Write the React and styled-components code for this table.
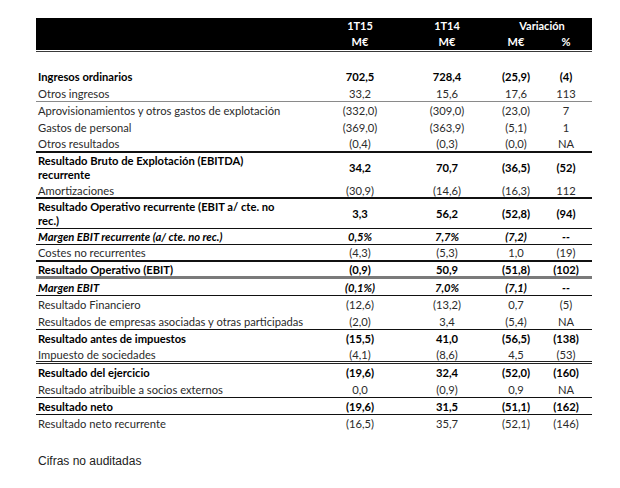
import React from "react";
import styled, { createGlobalStyle } from "styled-components";

const Global = createGlobalStyle`
  html, body { margin: 0; padding: 0; background: #fff; }
  body { font-family: Lato, "Open Sans", sans-serif; }
`;

const COLS = "282px 84px 90px 48px 52px";

const Page = styled.div`
  width: 620px;
  height: 488px;
  box-sizing: border-box;
  padding: 18px 0 0 36px;
`;

const Table = styled.div`
  width: 556px;
`;

const HeadWrap = styled.div`
  padding-bottom: 1px;
  border-bottom: 1px solid #3a3a3a;
`;

const Head = styled.div`
  background: #000;
  color: #fff;
  display: grid;
  grid-template-columns: ${COLS};
  grid-auto-rows: 16px;
  height: 32px;
  font-size: 11px;
  font-weight: 700;
  line-height: 16px;
`;

const HeadCell = styled.div`
  text-align: center;
  grid-column: ${(p) => p.$span || "auto"};
`;

const Spacer = styled.div`
  height: 16px;
`;

const borders = {
  none: "none",
  gray: "1px solid #8a8a8a",
  black: "1px solid #111",
  heavy: "2px solid #111",
  thick: "3px solid #7a7a7a",
  double: "3px double #222",
};

const Row = styled.div`
  box-sizing: border-box;
  display: grid;
  grid-template-columns: ${COLS};
  align-items: center;
  height: ${(p) => (p.$multi ? "30px" : p.$tight ? "16px" : "17px")};
  font-size: 11.2px;
  line-height: ${(p) => (p.$multi ? "14px" : "15px")};
  color: ${(p) => (p.$bold ? "#000" : "#2b2b2b")};
  font-weight: ${(p) => (p.$bold ? 700 : 400)};
  font-style: ${(p) => (p.$italic ? "italic" : "normal")};
  border-bottom: ${(p) => borders[p.$border || "none"]};
`;

const Label = styled.div`
  padding-left: 2px;
`;

const Num = styled.div`
  text-align: center;
  white-space: nowrap;
`;

const Note = styled.div`
  margin-top: 22px;
  padding-left: 2px;
  font-family: "Liberation Sans", Arial, sans-serif;
  font-size: 12px;
  line-height: 14px;
  color: #222;
`;

const rows = [
  { l: "Ingresos ordinarios", v: ["702,5", "728,4", "(25,9)", "(4)"], b: true },
  { l: "Otros ingresos", v: ["33,2", "15,6", "17,6", "113"], border: "gray" },
  { l: "Aprovisionamientos y otros gastos de explotación", v: ["(332,0)", "(309,0)", "(23,0)", "7"] },
  { l: "Gastos de personal", v: ["(369,0)", "(363,9)", "(5,1)", "1"] },
  { l: "Otros resultados", v: ["(0,4)", "(0,3)", "(0,0)", "NA"], border: "heavy" },
  { l: ["Resultado Bruto de Explotación (EBITDA)", "recurrente"], v: ["34,2", "70,7", "(36,5)", "(52)"], b: true },
  { l: "Amortizaciones", v: ["(30,9)", "(14,6)", "(16,3)", "112"], border: "heavy", t: true },
  { l: ["Resultado Operativo recurrente (EBIT a/ cte. no", "rec.)"], v: ["3,3", "56,2", "(52,8)", "(94)"], b: true, border: "black" },
  { l: "Margen EBIT recurrente (a/ cte. no rec.)", v: ["0,5%", "7,7%", "(7,2)", "--"], b: true, i: true, border: "black", t: true },
  { l: "Costes no recurrentes", v: ["(4,3)", "(5,3)", "1,0", "(19)"], border: "heavy" },
  { l: "Resultado Operativo (EBIT)", v: ["(0,9)", "50,9", "(51,8)", "(102)"], b: true, border: "thick" },
  { l: "Margen EBIT", v: ["(0,1%)", "7,0%", "(7,1)", "--"], b: true, i: true, border: "black" },
  { l: "Resultado Financiero", v: ["(12,6)", "(13,2)", "0,7", "(5)"] },
  { l: "Resultados de empresas asociadas y otras participadas", v: ["(2,0)", "3,4", "(5,4)", "NA"], border: "black" },
  { l: "Resultado antes de impuestos", v: ["(15,5)", "41,0", "(56,5)", "(138)"], b: true },
  { l: "Impuesto de sociedades", v: ["(4,1)", "(8,6)", "4,5", "(53)"], border: "double" },
  { l: "Resultado del ejercicio", v: ["(19,6)", "32,4", "(52,0)", "(160)"], b: true },
  { l: "Resultado atribuible a socios externos", v: ["0,0", "(0,9)", "0,9", "NA"], border: "black" },
  { l: "Resultado neto", v: ["(19,6)", "31,5", "(51,1)", "(162)"], b: true, border: "black" },
  { l: "Resultado neto recurrente", v: ["(16,5)", "35,7", "(52,1)", "(146)"] },
];

export default function App() {
  return (
    <Page>
      <Global />
      <Table>
        <HeadWrap>
          <Head>
            <HeadCell />
            <HeadCell>1T15</HeadCell>
            <HeadCell>1T14</HeadCell>
            <HeadCell $span="span 2">Variación</HeadCell>
            <HeadCell />
            <HeadCell>M€</HeadCell>
            <HeadCell>M€</HeadCell>
            <HeadCell>M€</HeadCell>
            <HeadCell>%</HeadCell>
          </Head>
        </HeadWrap>
        <Spacer />
        {rows.map((r, idx) => {
          const multi = Array.isArray(r.l);
          return (
            <Row
              key={idx}
              $bold={r.b}
              $italic={r.i}
              $border={r.border}
              $multi={multi}
              $tight={r.t}
            >
              <Label>
                {multi ? (
                  <>
                    {r.l[0]}
                    <br />
                    {r.l[1]}
                  </>
                ) : (
                  r.l
                )}
              </Label>
              {r.v.map((v, j) => (
                <Num key={j}>{v}</Num>
              ))}
            </Row>
          );
        })}
      </Table>
      <Note>Cifras no auditadas</Note>
    </Page>
  );
}
